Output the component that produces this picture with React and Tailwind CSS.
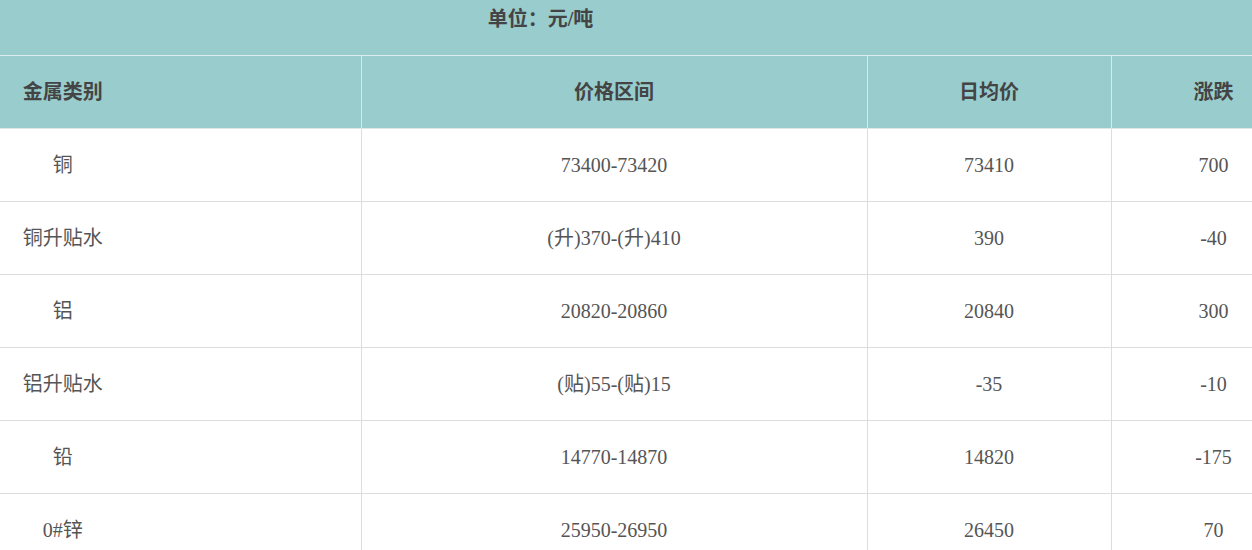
import React from "react";

const rows = [
  ["铜", "73400-73420", "73410", "700"],
  ["铜升贴水", "(升)370-(升)410", "390", "-40"],
  ["铝", "20820-20860", "20840", "300"],
  ["铝升贴水", "(贴)55-(贴)15", "-35", "-10"],
  ["铅", "14770-14870", "14820", "-175"],
  ["0#锌", "25950-26950", "26450", "70"],
];

const font = { fontFamily: '"Liberation Serif", "Noto Sans CJK SC", serif' };

export default function App() {
  return (
    <div className="w-[1252px] h-[550px] overflow-hidden bg-white" style={font}>
      <table className="ml-[-235px] w-[1551px] table-fixed border-collapse text-[20px] text-[#555]">
        <colgroup>
          <col className="w-[596px]" />
          <col className="w-[506px]" />
          <col className="w-[244px]" />
          <col className="w-[205px]" />
        </colgroup>
        <thead>
          <tr className="bg-[#99cccc]">
            <th colSpan={4} className="h-[55px] pb-[17px] text-center align-middle font-bold text-[#444] border-b border-[#dceeee]">
              单位：元/吨
            </th>
          </tr>
          <tr className="bg-[#99cccc]">
            {["金属类别", "价格区间", "日均价", "涨跌"].map((h) => (
              <th key={h} className="h-[73px] text-center align-middle font-bold text-[#444] border-r border-b border-[#dde7e7]">
                {h}
              </th>
            ))}
          </tr>
        </thead>
        <tbody>
          {rows.map((r, i) => (
            <tr key={i}>
              {r.map((c, j) => (
                <td key={j} className="h-[73px] text-center align-middle border-r border-b border-[#dddddd]">
                  {c}
                </td>
              ))}
            </tr>
          ))}
        </tbody>
      </table>
    </div>
  );
}
